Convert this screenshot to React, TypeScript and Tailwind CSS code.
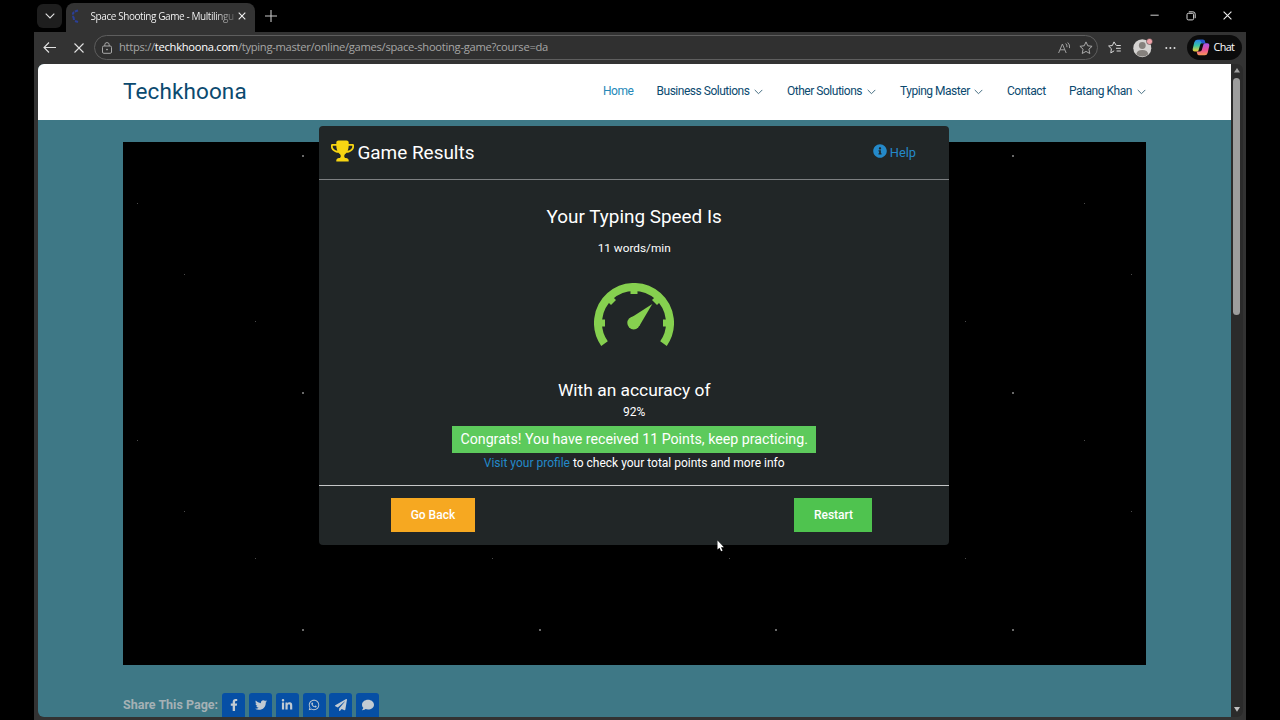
import React from 'react';
import { FaComment, FaFacebookF, FaInfoCircle, FaLinkedinIn, FaPaperPlane, FaTwitter, FaWhatsapp } from 'react-icons/fa';

const navItems = [
  { label: 'Home', width: 'w-[29.5px]', active: true },
  { label: 'Business Solutions', width: 'w-[93.5px]', menu: true },
  { label: 'Other Solutions', width: 'w-[76px]', menu: true },
  { label: 'Typing Master', width: 'w-[70px]', menu: true },
  { label: 'Contact', width: 'w-[38px]' },
  { label: 'Patang Khan', width: 'w-[63.5px]', menu: true },
];

const shareIcons = [FaFacebookF, FaTwitter, FaLinkedinIn, FaWhatsapp, FaPaperPlane, FaComment];

// star positions inside the game canvas
const brightStars = [
  [179, 13], [889, 13], [179, 250], [889, 250],
  [179, 487], [416, 487], [652, 487], [889, 487],
];
const dimStars = [
  [14, 61], [961, 61], [61, 132], [1008, 132], [132, 179], [842, 179],
  [14, 298], [961, 298], [61, 369], [1008, 369], [132, 416], [369, 416], [606, 416], [842, 416],
];

function TabBar() {
  return (
    <div className="flex h-8 items-start">
      <button className="ml-[3px] mt-1 flex h-6 w-[25px] items-center justify-center rounded-md bg-[#1e1e1e]">
        <svg width="10" height="6" viewBox="0 0 10 6" fill="none" stroke="#e0e0e0" strokeWidth="1.1"><path d="M.7.7 5 5 9.3.7" /></svg>
      </button>
      <div className="ml-1 mt-[3px] flex h-[29px] w-[189px] items-center rounded-t-lg bg-[#333] pb-[3px]">
        <svg className="ml-[5px] shrink-0" width="9" height="14" viewBox="0 0 9 14" fill="none" stroke="#2b3f96" strokeWidth="2">
          <path d="M7 1.5Q1 3 2 6" strokeDasharray="3 1" />
          <path d="M1.5 7Q3 8 3 11M4 12l3 1" />
        </svg>
        <div className="ml-[10.5px] w-[145px] whitespace-nowrap bg-gradient-to-r from-white from-85% to-[#555] bg-clip-text font-['Open_Sans'] text-[10px] tracking-[-0.42px] text-transparent">
          Space Shooting Game - Multilingu
        </div>
        <svg className="ml-[2.5px] shrink-0" width="8" height="8" viewBox="0 0 8 8" stroke="#f2f2f2" strokeWidth="1.1"><path d="m.7.7 6.6 6.6M7.3.7.7 7.3" /></svg>
      </div>
      <svg className="ml-[10px] mt-[10px]" width="12" height="12" viewBox="0 0 12 12" stroke="#c8c8c8" strokeWidth="1.1"><path d="M6 0v12M0 6h12" /></svg>
      <div className="ml-auto mr-[14px] mt-[10.5px] flex items-center gap-[27px]">
        <svg width="9" height="9" viewBox="0 0 9 9" stroke="#d0d0d0"><path d="M.5 4.2h8.2" /></svg>
        <svg width="10" height="10" viewBox="0 0 10 10" fill="none" stroke="#d8d8d8">
          <rect x="1" y="2.3" width="6.6" height="6.6" rx="1.3" />
          <path d="M2.8.8h4Q9.2.8 9.2 3.2v4" />
        </svg>
        <svg width="9" height="9" viewBox="0 0 9 9" stroke="#eee" strokeWidth="1.1"><path d="m.6.6 7.8 7.8M8.4.6.6 8.4" /></svg>
      </div>
    </div>
  );
}

function Toolbar() {
  return (
    <div className="flex h-8 items-center bg-[#333] pb-px">
      <svg className="ml-[9px]" width="13" height="11" viewBox="0 0 13 11" fill="none" stroke="#e2e2e2" strokeWidth="1.1"><path d="M6 .5 1 5.5l5 5M1 5.5h12" /></svg>
      <svg className="ml-[18px]" width="10" height="10" viewBox="0 0 10 10" stroke="#e2e2e2" strokeWidth="1.1"><path d="m.5.5 9 9M9.5.5l-9 9" /></svg>
      <div className="ml-[10px] flex h-[25px] w-[1004px] items-center rounded-full border border-[#5e5e5e] bg-[#303030]">
        <svg className="ml-[7px]" width="10" height="12" viewBox="0 0 10 12" fill="none" stroke="#a8a8a8">
          <rect x=".5" y="4" width="9" height="7.3" rx="1.3" />
          <path d="M2.8 4V2.8a2.2 2.2 0 0 1 4.4 0V4" />
          <circle cx="5" cy="7.6" r=".5" fill="#a8a8a8" />
        </svg>
        <span className="ml-[7px] whitespace-nowrap font-['Open_Sans'] text-[11.2px] tracking-[-0.29px] text-[#a6a6a6]">
          https://<span className="text-white">techkhoona.com</span>/typing-master/online/games/space-shooting-game?course=da
        </span>
        <svg className="ml-auto" width="13" height="12" viewBox="0 0 13 12" fill="none" stroke="#a0a0a0" strokeWidth="1">
          <path d="M.6 11 4.4 2l3.8 9M2 7.8h4.9M7.7 1.5q1.5 1.3 1.3 3.7M9.7.5q2.4 2 1.8 5.6" />
        </svg>
        <svg className="ml-[8px] mr-[4px]" width="14" height="14" viewBox="0 0 14 14" fill="none" stroke="#aaa" strokeLinejoin="round">
          <path d="m7 .9 1.8 3.9 4.3.5-3.2 2.9.9 4.3L7 10.4l-3.8 2.1.9-4.3L.9 5.3l4.3-.5z" />
        </svg>
      </div>
      <svg className="ml-[10px]" width="13" height="13" viewBox="0 0 13 13" fill="none" stroke="#dadada" strokeLinejoin="round">
        <path d="M8.3 4.5 6 .9 4.4 4.5.6 5l2.8 2.7-.6 4.2L6.2 9.8M8.5 4.5h4.3M8 7.3h4.8M8.6 10h4.2" />
      </svg>
      <svg className="ml-[12px]" width="20" height="20" viewBox="0 0 20 20">
        <circle cx="9.3" cy="10.2" r="9" fill="#d5d3d1" />
        <circle cx="9.3" cy="7.5" r="3.4" fill="#85817d" />
        <path d="M3.3 16.3q.5-4.4 6-4.4t6 4.4a9 9 0 0 1-12 0z" fill="#85817d" />
        <circle cx="16.5" cy="3.5" r="3" fill="#efa3a9" stroke="#333" strokeWidth=".5" />
      </svg>
      <svg className="ml-[12px]" width="12" height="4" viewBox="0 0 12 4" fill="#e0e0e0"><circle cx="1.3" cy="2" r="1" /><circle cx="5.4" cy="2" r="1" /><circle cx="9.5" cy="2" r="1" /></svg>
      <div className="ml-[9.5px] flex h-[25px] w-[55px] items-center rounded-full bg-[#0b0b0b]">
        <svg className="ml-[5px]" width="18" height="17" viewBox="0 0 18 17">
          <defs>
            <linearGradient id="copilotLeft" x1="0" y1="0" x2="0" y2="1">
              <stop offset="0" stopColor="#2a83ea" /><stop offset=".5" stopColor="#38c5a3" /><stop offset="1" stopColor="#f3cf35" />
            </linearGradient>
            <linearGradient id="copilotRight" x1="0" y1="0" x2="0" y2="1">
              <stop offset="0" stopColor="#a556ee" /><stop offset=".55" stopColor="#eb5095" /><stop offset="1" stopColor="#f89a55" />
            </linearGradient>
          </defs>
          <path d="M5 .7h6q1.3 0 1.7 1.4l.7 2.2H10q-1.4 0-1.8 1.4l-1.6 5.6q-.4 1.2-1.7 1.2H2.8Q.2 12.5.8 9.5l1.5-6.3Q3 .7 5 .7z" fill="url(#copilotLeft)" />
          <path d="M13 16.3H7q-1.3 0-1.7-1.4l-.7-2.4H8q1.4 0 1.8-1.4l1.6-5.6q.4-1.2 1.7-1.2h2.1q2.6 0 2 3l-1.5 6.5Q15 16.3 13 16.3z" fill="url(#copilotRight)" />
          <path d="M5 .7h6q1.3 0 1.7 1.4l.7 2.2H10L7.8.9z" fill="#2454cf" />
        </svg>
        <span className="ml-[4px] font-['Open_Sans'] text-[10.8px] tracking-[-0.6px] text-white">Chat</span>
      </div>
    </div>
  );
}

function SiteHeader() {
  return (
    <header className="flex h-14 items-center bg-white pl-[85px] pr-[85.5px] text-[#0b4a6f]">
      <div className="-mt-px text-[22.5px] tracking-[0.12px]">Techkhoona</div>
      <nav className="-mt-[2px] ml-auto flex gap-6 text-[12px] tracking-[-0.48px]">
        {navItems.map(item => (
          <a key={item.label} className={item.active ? 'flex items-center text-[#2588b8]' : 'flex items-center'}>
            <span className={`whitespace-nowrap ${item.width}`}>{item.label}</span>
            {item.menu && (
              <svg className="ml-1 mt-px" width="9" height="6" viewBox="0 0 9 6" fill="none" stroke="#476f83" strokeWidth="1"><path d="M.7.9 4.5 4.7 8.3.9" /></svg>
            )}
          </a>
        ))}
      </nav>
    </header>
  );
}

function Gauge() {
  return (
    <svg className="mx-auto mt-[27px] block" width="80" height="66" viewBox="0 0 80 66" fill="none" stroke="#86d04f">
      <path d="M10.5 60.6A36 36 0 1 1 69.5 60.6" strokeWidth="8" />
      {[180, 225, 270, 315, 360].map(angle => (
        <path key={angle} d="M69 40h5" strokeWidth="7" transform={`rotate(${angle} 40 40)`} />
      ))}
      <circle cx="39.7" cy="40" r="6.4" fill="#86d04f" stroke="none" />
      <path d="M34.6 36.2 58.3 21 45.3 42.9z" fill="#86d04f" stroke="none" />
    </svg>
  );
}

function ResultsModal() {
  return (
    <div className="absolute left-[281.4px] top-[61.5px] flex h-[419.5px] w-[629.6px] flex-col rounded bg-[#212627] text-white">
      <div className="flex h-[54.5px] items-center border-b border-[#7d8082] pl-3 pr-[33px]">
        <svg className="-mt-[3px]" width="23" height="22" viewBox="0 -102 1664 1536" fill="#f7d512">
          <path d="M458 653q-74-162-74-371H128v96q0 78 94.5 162T458 653zM1536 378v-96h-256q0 209-74 371 141-29 235.5-113T1536 378zM1664 250v128q0 71-41.5 143t-112 130-173 97.5T1122 793q-42 54-95 95-38 34-52.5 72.5T960 1050q0 54 30.5 91t97.5 37q75 0 133.5 45.5T1280 1338v64q0 14-9 23t-23 9H416q-14 0-23-9t-9-23v-64q0-69 58.5-114.5T576 1178q67 0 97.5-37t30.5-91q0-51-14.5-89.5T637 888q-53-41-95-95-113-5-215.5-44.5t-173-97.5-112-130T0 378V250q0-40 28-68t68-28h288V58q0-66 47-113t113-47h576q66 0 113 47t47 113v96h288q40 0 68 28t28 68z" />
        </svg>
        <h2 className="ml-[3px] mt-px text-[18.95px]">Game Results</h2>
        <a className="ml-auto flex items-center gap-[3px] text-[12.8px] text-[#2489c9]">
          <FaInfoCircle className="-mt-[3px] h-[14px] w-[14px]" />
          Help
        </a>
      </div>
      <div className="flex-1 pt-[25px] text-center">
        <h3 className="text-[18.9px] leading-6">Your Typing Speed Is</h3>
        <p className="mt-[11px] text-[11.8px] leading-4">11 words/min</p>
        <Gauge />
        <h3 className="mt-[29px] text-[17.4px] leading-6">With an accuracy of</h3>
        <p className="mt-[2px] text-[12px] leading-4">92%</p>
        <div className="mx-auto mt-[6px] flex h-[27px] w-[364px] items-center justify-center whitespace-nowrap bg-[#5dca5c] text-[14.2px]">
          Congrats! You have received 11 Points, keep practicing.
        </div>
        <p className="mt-[2px] text-[12px] leading-4">
          <a className="text-[#2489c9]">Visit your profile</a> to check your total points and more info
        </p>
      </div>
      <div className="flex h-[60px] justify-between border-t border-[#c5c7c8] pl-[71.5px] pr-[76.5px] pt-[12px] text-[12px] font-medium">
        <button className="h-[34px] w-[84px] bg-[#f6a821]">Go Back</button>
        <button className="h-[34px] w-[78px] bg-[#4fc34f]">Restart</button>
      </div>
    </div>
  );
}

export default function App() {
  return (
    <div className="relative h-[720px] w-[1280px] overflow-hidden bg-black font-[Roboto,sans-serif]">
      <div className="ml-[34px] flex h-[720px] w-[1212px] flex-col">
        <TabBar />
        <Toolbar />
        <div className="flex h-[656px] bg-[#333] pl-1">
          <main className="relative h-[653px] w-[1193px] overflow-hidden rounded-l-md bg-[#3e7886]">
            <SiteHeader />
            <div className="relative ml-[85px] mt-[22px] h-[523px] w-[1023px] bg-black">
              {brightStars.map(([x, y]) => (
                <i key={`${x}-${y}`} className="absolute h-[2px] w-[2px] bg-[#686868]" style={{ left: x, top: y }} />
              ))}
              {dimStars.map(([x, y]) => (
                <i key={`${x}-${y}`} className="absolute h-px w-px bg-[#4a4a4a]" style={{ left: x, top: y }} />
              ))}
            </div>
            <div className="ml-[85px] mt-[28px] flex gap-[3.75px]">
              <span className="w-[95.5px] whitespace-nowrap pt-[3px] text-[12.5px] font-bold text-[#a5b1b5]">Share This Page:</span>
              {shareIcons.map((Icon, i) => (
                <a key={i} className="flex h-[26px] w-[23px] justify-center rounded-[3px] bg-[#064fa5] pt-[6px] text-[12px] text-[#c2cbd3]">
                  <Icon />
                </a>
              ))}
            </div>
            <ResultsModal />
          </main>
          <div className="flex h-[653px] w-3 flex-col items-center rounded-r-md bg-[#2b2b2b]">
            <svg className="mt-[4px] shrink-0" width="6" height="5" viewBox="0 0 6 5" fill="#a0a0a0"><path d="M3 0 6 4.5H0z" /></svg>
            <div className="mr-px mt-[5px] h-[237px] w-[7px] shrink-0 rounded-full bg-[#9d9d9d]" />
            <svg className="mb-[5px] mt-auto shrink-0" width="6" height="5" viewBox="0 0 6 5" fill="#c0c0c0"><path d="M0 0h6L3 4.8z" /></svg>
          </div>
        </div>
      </div>
      <svg className="absolute left-[717px] top-[540px]" width="8" height="12" viewBox="0 0 8 12"><path d="M.5.5v9l2-1.7 1.6 3.4 1.5-.7L4 7.3h2.9z" fill="#fff" /></svg>
    </div>
  );
}
